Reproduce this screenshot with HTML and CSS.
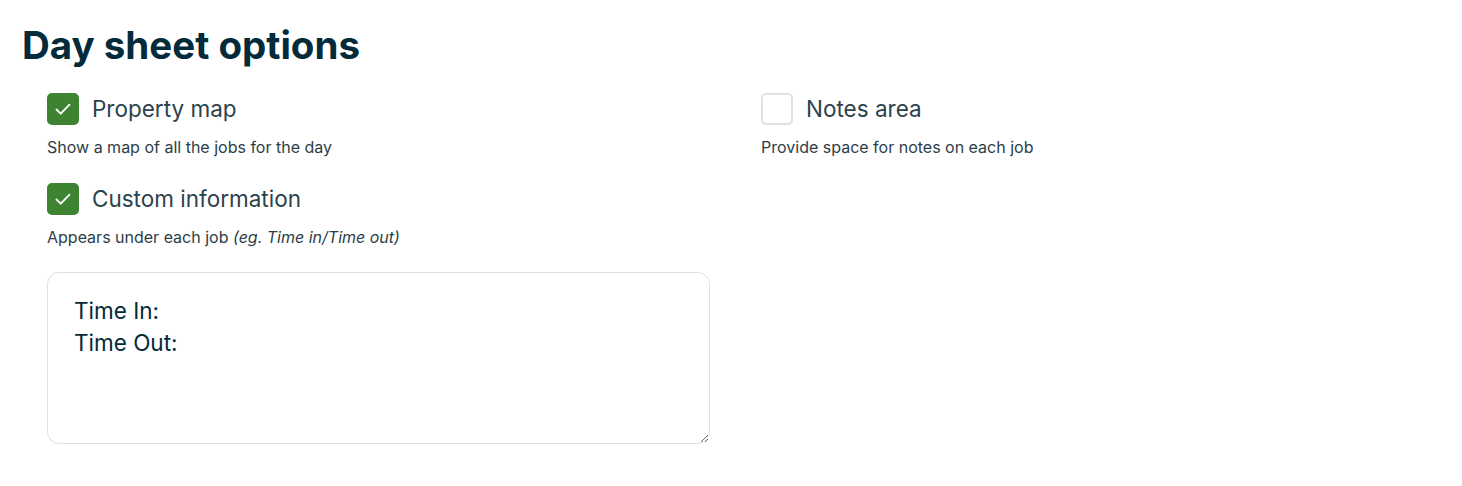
FILE: index.html
```html
<!DOCTYPE html>
<html>
<head>
<meta charset="utf-8">
<link rel="stylesheet" href="styles.css">
</head>
<body>
<main class="page">
  <h1 class="title">Day sheet options</h1>
  <div class="grid">
    <div class="col">
      <div class="option">
        <label class="check-row">
          <span class="box checked">
            <svg viewBox="0 0 32 32" width="32" height="32"><path d="M9.5 16.5l4.2 4.2 8.8-9" fill="none" stroke="#fff" stroke-width="1.9" stroke-linecap="round" stroke-linejoin="round"/></svg>
          </span>
          <span class="label">Property map</span>
        </label>
        <p class="desc">Show a map of all the jobs for the day</p>
      </div>
      <div class="option">
        <label class="check-row">
          <span class="box checked">
            <svg viewBox="0 0 32 32" width="32" height="32"><path d="M9.5 16.5l4.2 4.2 8.8-9" fill="none" stroke="#fff" stroke-width="1.9" stroke-linecap="round" stroke-linejoin="round"/></svg>
          </span>
          <span class="label">Custom information</span>
        </label>
        <p class="desc">Appears under each job <em>(eg. Time in/Time out)</em></p>
        <textarea class="area">Time In:
Time Out:</textarea>
      </div>
    </div>
    <div class="col">
      <div class="option">
        <label class="check-row">
          <span class="box"></span>
          <span class="label">Notes area</span>
        </label>
        <p class="desc">Provide space for notes on each job</p>
      </div>
    </div>
  </div>
</main>
</body>
</html>
```
FILE: styles.css
```css
* { box-sizing: border-box; }
html, body { margin: 0; background: #fff; }
body {
  font-family: Inter, "Noto Sans", sans-serif;
  color: #032b3a;
}
.page { padding: 17px 22px 0 22px; }
.title {
  margin: 0;
  font-size: 38.5px;
  font-weight: 700;
  line-height: 56px;
  color: #032b3a;
}
.grid {
  display: grid;
  grid-template-columns: 663px 663px;
  column-gap: 51px;
  padding-left: 25px;
  margin-top: 20px;
}
.col { display: flex; flex-direction: column; gap: 26px; }
.option { display: flex; flex-direction: column; }
.check-row { display: flex; align-items: center; gap: 13px; height: 32px; }
.box {
  width: 32px; height: 32px;
  border-radius: 5px;
  border: 2px solid #dce1e3;
  background: #fff;
  display: flex; align-items: center; justify-content: center;
  flex: none;
}
.box.checked { background: #3d8332; border-color: #3d8332; }
.box svg { display: block; flex: none; margin: -2px; }
.label { font-size: 22.5px; color: #2d424c; line-height: 32px; }
.desc { margin: 12px 0 0 0; font-size: 16px; line-height: 20px; color: #2c3e48; }
.desc em { font-style: italic; }
.area {
  display: block;
  width: 663px;
  height: 172px;
  margin-top: 25px;
  border: 1px solid #dde1e3;
  border-radius: 12px;
  padding: 22px 26px;
  font-family: Inter, "Noto Sans", sans-serif;
  font-size: 22.5px;
  line-height: 32px;
  color: #032b3a;
  resize: vertical;
  outline: none;
}
```
